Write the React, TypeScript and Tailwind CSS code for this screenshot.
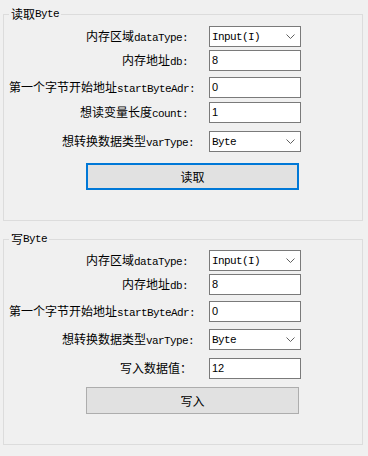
import React from "react";

const CJK = "font-['Noto_Sans_CJK_SC',sans-serif]";
const LAT = "font-['Liberation_Mono','Noto_Sans_CJK_SC',monospace] text-[11px] tracking-[-0.6px]";

function Chevron() {
  return (
    <svg width="9" height="5" viewBox="0 0 9 5" className="shrink-0">
      <path d="M0.5 0.5 L4.5 4.5 L8.5 0.5" fill="none" stroke="#606060" strokeWidth="1" />
    </svg>
  );
}

function Combo({ value }: { value: string }) {
  return (
    <div className="w-[92px] h-[21px] bg-white border border-[#7a7a7a] flex items-center justify-between pl-[2px] pr-[5px] text-[11px] leading-[14px]">
      <span className={`${LAT} text-black leading-[14px]`}>{value}</span>
      <Chevron />
    </div>
  );
}

function TextBox({ value }: { value: string }) {
  return (
    <div className="w-[92px] h-[21px] bg-white border border-[#7a7a7a] flex items-center pl-[2px] text-[11px] leading-[13px]">
      <span className="font-['Liberation_Sans',sans-serif] text-[11px] leading-[13px] text-black">{value}</span>
    </div>
  );
}

function Row({
  cjk,
  latin,
  control,
  mt,
  pr,
}: {
  cjk: string;
  latin?: string;
  control: React.ReactNode;
  mt: string;
  pr: string;
}) {
  return (
    <div className={`flex items-center h-[21px] ${mt}`}>
      <div className={`w-[191px] text-right whitespace-nowrap text-[12px] leading-[14px] ${pr}`}>
        <span className={`${CJK} text-[12px]`}>{cjk}</span>
        {latin ? <span className={LAT}>{latin}</span> : null}
      </div>
      <div className="ml-[14px]">{control}</div>
    </div>
  );
}

function Legend({ cjk, latin }: { cjk: string; latin: string }) {
  return (
    <legend className="ml-[5px] px-[2px] h-[14px] flex items-center text-[12px] leading-[14px] text-black">
      <span className={`${CJK} text-[12px]`}>{cjk}</span>
      <span className={LAT}>{latin}</span>
    </legend>
  );
}

export default function App() {
  return (
    <div className="w-[368px] h-[456px] bg-[#f0f0f0] pt-[7px] px-[3px] text-black text-[12px] overflow-hidden">
      <fieldset className="border border-[#dcdcdc] h-[214px] w-[360px] min-w-0">
        <Legend cjk="读取" latin="Byte" />
        <div className="pt-[5px] flex flex-col">
          <Row cjk="内存区域" latin="dataType:" control={<Combo value="Input(I)" />} mt="mt-0" pr="pr-[7px]" />
          <Row cjk="内存地址" latin="db:" control={<TextBox value="8" />} mt="mt-[3px]" pr="pr-[7px]" />
          <Row cjk="第一个字节开始地址" latin="startByteAdr:" control={<TextBox value="0" />} mt="mt-[6px]" pr="pr-0" />
          <Row cjk="想读变量长度" latin="count:" control={<TextBox value="1" />} mt="mt-[4px]" pr="pr-[7px]" />
          <Row cjk="想转换数据类型" latin="varType:" control={<Combo value="Byte" />} mt="mt-[8px]" pr="pr-[1px]" />
          <div className="mt-[11px] ml-[82px] w-[213px] h-[27px] bg-[#e1e1e1] border-2 border-[#0078d7] flex items-center justify-center">
            <span className={`${CJK} text-[12px] leading-[14px]`}>读取</span>
          </div>
        </div>
      </fieldset>

      <fieldset className="mt-[11px] border border-[#dcdcdc] h-[213px] w-[360px] min-w-0">
        <Legend cjk="写" latin="Byte" />
        <div className="pt-[4px] flex flex-col">
          <Row cjk="内存区域" latin="dataType:" control={<Combo value="Input(I)" />} mt="mt-0" pr="pr-[7px]" />
          <Row cjk="内存地址" latin="db:" control={<TextBox value="8" />} mt="mt-[3px]" pr="pr-[7px]" />
          <Row cjk="第一个字节开始地址" latin="startByteAdr:" control={<TextBox value="0" />} mt="mt-[6px]" pr="pr-0" />
          <Row cjk="想转换数据类型" latin="varType:" control={<Combo value="Byte" />} mt="mt-[7px]" pr="pr-[1px]" />
          <Row cjk="写入数据值：" control={<TextBox value="12" />} mt="mt-[8px]" pr="pr-[3px]" />
          <div className="mt-[8px] ml-[82px] w-[213px] h-[27px] bg-[#e1e1e1] border border-[#adadad] flex items-center justify-center">
            <span className={`${CJK} text-[12px] leading-[14px]`}>写入</span>
          </div>
        </div>
      </fieldset>
    </div>
  );
}
